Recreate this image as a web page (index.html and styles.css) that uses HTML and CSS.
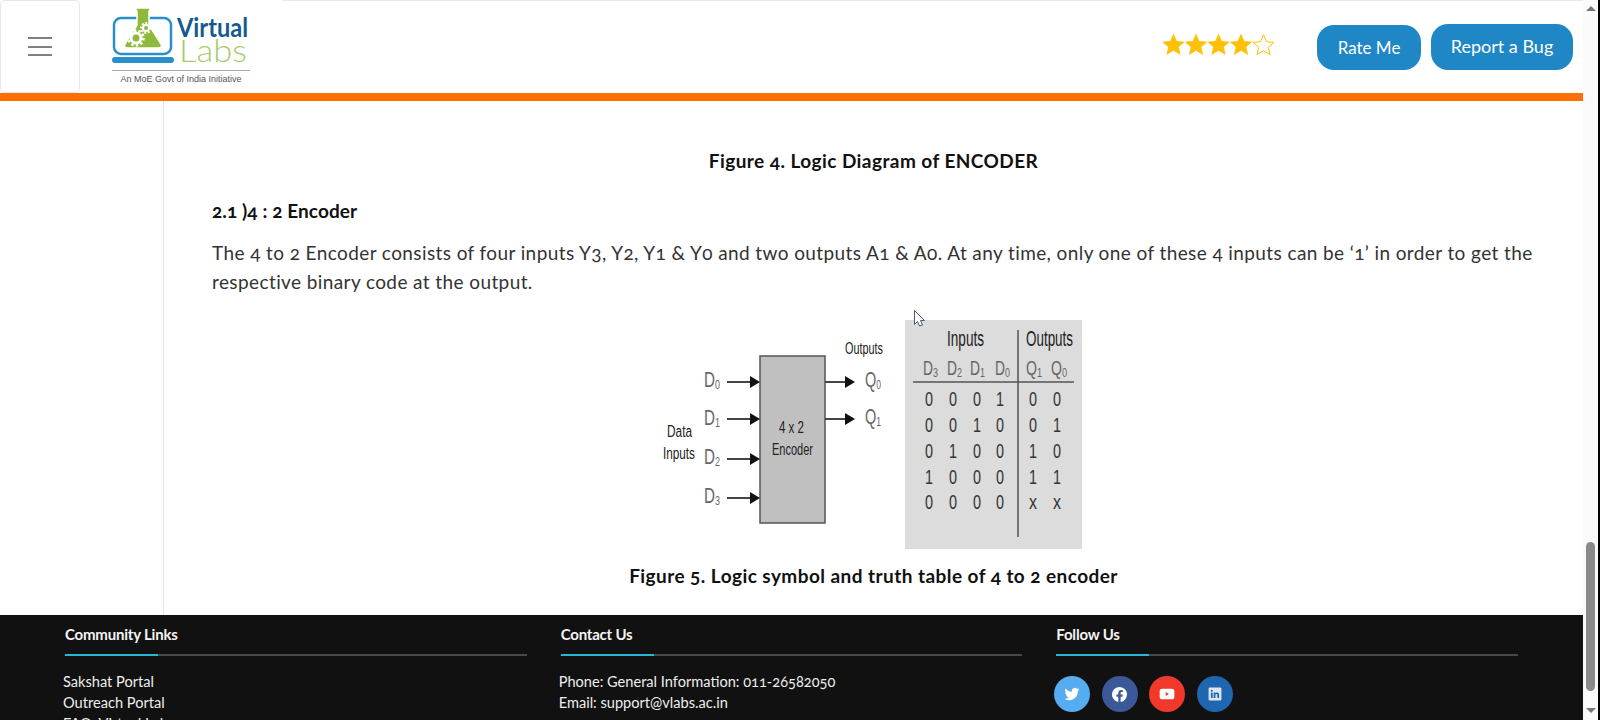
FILE: index.html
```html
<!DOCTYPE html>
<html lang="en">
<head>
    <meta charset="UTF-8">
    <meta name="viewport" content="width=device-width, initial-scale=1.0">
    <title>Encoder - Theory</title>
    <link rel="stylesheet" href="styles.css">
</head>
<body>
<div class="page">
    <div class="main">
        <header class="topbar">
            <button class="menu-btn" aria-label="menu"><span></span><span></span><span></span></button>
            <div class="logo">
                <svg width="138" height="63" viewBox="0 0 138 63">
                    <rect x="2" y="11" width="57" height="36" rx="7" fill="none" stroke="#2a8ec9" stroke-width="2.500"/>
                    <rect x="0" y="50" width="62" height="6" rx="3" fill="#2a8ec9"/>
                    <path d="M24 1h14v3h-1v14l12 19q2 4-3 4H16q-5 0-3-4l12-19V4h-1z" fill="#8fb93a" stroke="#fff" stroke-width="1.500"/>
                    <circle cx="24" cy="31" r="5" fill="none" stroke="#fff" stroke-width="3"/>
                    <circle cx="24" cy="31" r="7.500" fill="none" stroke="#fff" stroke-width="2.500" stroke-dasharray="2.500 2.200"/>
                    <circle cx="34" cy="21" r="3" fill="none" stroke="#fff" stroke-width="2"/>
                    <circle cx="34" cy="21" r="5" fill="none" stroke="#fff" stroke-width="1.800" stroke-dasharray="2 1.700"/>
                    <text x="65" y="30" class="logo-virtual" textLength="71" lengthAdjust="spacingAndGlyphs">Virtual</text>
                    <text x="67" y="55" class="logo-labs" textLength="68" lengthAdjust="spacingAndGlyphs">Labs</text>
                </svg>
                <div class="logo-note">An MoE Govt of India Initiative</div>
            </div>
            <div class="topbar-right">
                <div class="stars">
                    <svg width="114" height="24" viewBox="0 0 114 24">
                        <path id="star" d="M11.500 .5l3.300 7.500 8 .7-6 5.300 1.800 8-7.100-4.200-7.100 4.200 1.800-8-6-5.300 8-.7z" fill="#ffc107"/>
                        <use href="#star" x="22.500"/>
                        <use href="#star" x="45"/>
                        <use href="#star" x="67.500"/>
                        <path d="M101.500 1.800l3 6.900 7.400.7-5.600 4.900 1.700 7.300-6.500-3.900-6.500 3.900 1.700-7.300-5.600-4.900 7.400-.7z" fill="none" stroke="#ffc107" stroke-width="1"/>
                    </svg>
                </div>
                <a class="btn btn-rate">Rate Me</a>
                <a class="btn btn-bug">Report a Bug</a>
            </div>
        </header>

        <div class="content-wrap">
            <main class="content">
                <p class="caption caption-first">Figure 4. Logic Diagram of ENCODER</p>
                <h4 class="sub-head">2.1 )4 : 2 Encoder</h4>
                <p class="para">The 4 to 2 Encoder consists of four inputs Y3, Y2, Y1 &amp; Y0 and two outputs A1 &amp; A0. At any time, only one of these 4 inputs can be ‘1’ in order to get the respective binary code at the output.</p>
                <svg class="figure" width="440" height="248" viewBox="654 308 440 248">
                    <rect x="905" y="320" width="177" height="229" fill="#dcdcdc"/>
                    <rect x="760" y="356" width="65" height="167" fill="#c0c0c0" stroke="#555" stroke-width="1.500"/>
                    <path d="M727 382h24M727 419h24M727 459h24M727 498h24M825 382h20M825 419h20" stroke="#444" stroke-width="2"/>
                    <path d="M750 376l10 6-10 6zM750 413l10 6-10 6zM750 453l10 6-10 6zM750 492l10 6-10 6zM845 376l10 6-10 6zM845 413l10 6-10 6z" fill="#111"/>
                    <g class="dia">
                        <text x="845" y="354" textLength="38" lengthAdjust="spacingAndGlyphs">Outputs</text>
                        <text x="667" y="437" textLength="25" lengthAdjust="spacingAndGlyphs">Data</text>
                        <text x="663" y="459" textLength="32" lengthAdjust="spacingAndGlyphs">Inputs</text>
                        <text x="779" y="433" textLength="25" lengthAdjust="spacingAndGlyphs">4 x 2</text>
                        <text x="772" y="455" textLength="41" lengthAdjust="spacingAndGlyphs">Encoder</text>
                    </g>
                    <g class="dia-sig">
                        <text x="704" y="387" textLength="16" lengthAdjust="spacingAndGlyphs">D<tspan class="sub" dy="2">0</tspan></text>
                        <text x="704" y="425" textLength="16" lengthAdjust="spacingAndGlyphs">D<tspan class="sub" dy="2">1</tspan></text>
                        <text x="704" y="464" textLength="16" lengthAdjust="spacingAndGlyphs">D<tspan class="sub" dy="2">2</tspan></text>
                        <text x="704" y="503" textLength="16" lengthAdjust="spacingAndGlyphs">D<tspan class="sub" dy="2">3</tspan></text>
                        <text x="865" y="387" textLength="16" lengthAdjust="spacingAndGlyphs">Q<tspan class="sub" dy="2">0</tspan></text>
                        <text x="865" y="424" textLength="16" lengthAdjust="spacingAndGlyphs">Q<tspan class="sub" dy="2">1</tspan></text>
                    </g>
                    <path d="M1018 330v207" stroke="#555" stroke-width="1.500"/>
                    <path d="M913 382h161" stroke="#555" stroke-width="1.500"/>
                    <g class="tbl-head">
                        <text x="947" y="346" textLength="37" lengthAdjust="spacingAndGlyphs">Inputs</text>
                        <text x="1026" y="346" textLength="47" lengthAdjust="spacingAndGlyphs">Outputs</text>
                    </g>
                    <g class="dia-sig tbl-sig">
                        <text x="923" y="375" textLength="15" lengthAdjust="spacingAndGlyphs">D<tspan class="sub" dy="2">3</tspan></text>
                        <text x="947" y="375" textLength="15" lengthAdjust="spacingAndGlyphs">D<tspan class="sub" dy="2">2</tspan></text>
                        <text x="970" y="375" textLength="15" lengthAdjust="spacingAndGlyphs">D<tspan class="sub" dy="2">1</tspan></text>
                        <text x="995" y="375" textLength="15" lengthAdjust="spacingAndGlyphs">D<tspan class="sub" dy="2">0</tspan></text>
                        <text x="1026" y="375" textLength="16" lengthAdjust="spacingAndGlyphs">Q<tspan class="sub" dy="2">1</tspan></text>
                        <text x="1051" y="375" textLength="16" lengthAdjust="spacingAndGlyphs">Q<tspan class="sub" dy="2">0</tspan></text>
                    </g>
                    <g class="tbl-num">
                        <text x="925" y="406" textLength="8" lengthAdjust="spacingAndGlyphs">0</text><text x="949" y="406" textLength="8" lengthAdjust="spacingAndGlyphs">0</text><text x="973" y="406" textLength="8" lengthAdjust="spacingAndGlyphs">0</text><text x="996" y="406" textLength="8" lengthAdjust="spacingAndGlyphs">1</text><text x="1029" y="406" textLength="8" lengthAdjust="spacingAndGlyphs">0</text><text x="1053" y="406" textLength="8" lengthAdjust="spacingAndGlyphs">0</text>
                        <text x="925" y="432" textLength="8" lengthAdjust="spacingAndGlyphs">0</text><text x="949" y="432" textLength="8" lengthAdjust="spacingAndGlyphs">0</text><text x="973" y="432" textLength="8" lengthAdjust="spacingAndGlyphs">1</text><text x="996" y="432" textLength="8" lengthAdjust="spacingAndGlyphs">0</text><text x="1029" y="432" textLength="8" lengthAdjust="spacingAndGlyphs">0</text><text x="1053" y="432" textLength="8" lengthAdjust="spacingAndGlyphs">1</text>
                        <text x="925" y="458" textLength="8" lengthAdjust="spacingAndGlyphs">0</text><text x="949" y="458" textLength="8" lengthAdjust="spacingAndGlyphs">1</text><text x="973" y="458" textLength="8" lengthAdjust="spacingAndGlyphs">0</text><text x="996" y="458" textLength="8" lengthAdjust="spacingAndGlyphs">0</text><text x="1029" y="458" textLength="8" lengthAdjust="spacingAndGlyphs">1</text><text x="1053" y="458" textLength="8" lengthAdjust="spacingAndGlyphs">0</text>
                        <text x="925" y="484" textLength="8" lengthAdjust="spacingAndGlyphs">1</text><text x="949" y="484" textLength="8" lengthAdjust="spacingAndGlyphs">0</text><text x="973" y="484" textLength="8" lengthAdjust="spacingAndGlyphs">0</text><text x="996" y="484" textLength="8" lengthAdjust="spacingAndGlyphs">0</text><text x="1029" y="484" textLength="8" lengthAdjust="spacingAndGlyphs">1</text><text x="1053" y="484" textLength="8" lengthAdjust="spacingAndGlyphs">1</text>
                        <text x="925" y="509" textLength="8" lengthAdjust="spacingAndGlyphs">0</text><text x="949" y="509" textLength="8" lengthAdjust="spacingAndGlyphs">0</text><text x="973" y="509" textLength="8" lengthAdjust="spacingAndGlyphs">0</text><text x="996" y="509" textLength="8" lengthAdjust="spacingAndGlyphs">0</text><text x="1029" y="509" textLength="8" lengthAdjust="spacingAndGlyphs">x</text><text x="1053" y="509" textLength="8" lengthAdjust="spacingAndGlyphs">x</text>
                    </g>
                    <path d="M914.500 310.500v14l3-3 2 4.500 3-1-2-4.500h4z" fill="#fff" stroke="#4a5a7a" stroke-width="1"/>
                </svg>
                <p class="caption">Figure 5. Logic symbol and truth table of 4 to 2 encoder</p>
            </main>
        </div>

        <footer class="footer">
            <div class="foot-col">
                <h5 class="foot-head">Community Links</h5>
                <ul class="foot-list">
                    <li>Sakshat Portal</li>
                    <li>Outreach Portal</li>
                    <li>FAQ: Virtual Labs</li>
                </ul>
            </div>
            <div class="foot-col">
                <h5 class="foot-head">Contact Us</h5>
                <ul class="foot-list">
                    <li>Phone: General Information: 011-26582050</li>
                    <li>Email: support@vlabs.ac.in</li>
                </ul>
            </div>
            <div class="foot-col">
                <h5 class="foot-head">Follow Us</h5>
                <div class="socials">
                    <a class="soc soc-tw"><svg width="16" height="16" viewBox="0 0 24 24"><path fill="#fff" d="M23 5c-.8.400-1.700.600-2.600.700.900-.600 1.600-1.400 2-2.500-.900.500-1.900.900-2.900 1.100A4.600 4.600 0 0 0 11.700 8.500C7.900 8.300 4.500 6.500 2.200 3.700c-1.200 2.100-.6 4.800 1.400 6.100-.7 0-1.400-.2-2.100-.6 0 2.200 1.600 4.200 3.700 4.600-.7.200-1.400.2-2.100.1.600 1.900 2.300 3.200 4.300 3.200A9.300 9.300 0 0 1 .6 19a13 13 0 0 0 20.100-11.500c.9-.6 1.700-1.500 2.300-2.500z"/></svg></a>
                    <a class="soc soc-fb"><svg width="15" height="15" viewBox="0 0 24 24"><path fill="#fff" d="M24 12a12 12 0 1 0-13.900 11.900v-8.400H7.100V12h3V9.400c0-3 1.800-4.700 4.500-4.700 1.300 0 2.700.2 2.700.2v3h-1.500c-1.500 0-2 .9-2 1.900V12h3.400l-.5 3.500h-2.900v8.400A12 12 0 0 0 24 12z"/></svg></a>
                    <a class="soc soc-yt"><svg width="16" height="16" viewBox="0 0 24 24"><rect x="1" y="4" width="22" height="16" rx="4" fill="#fff"/><path fill="#f0392b" d="M10 9l5 3-5 3z"/></svg></a>
                    <a class="soc soc-li"><svg width="14" height="14" viewBox="0 0 24 24"><path fill="#dde6f3" d="M21 1H3a2 2 0 0 0-2 2v18c0 1.100.9 2 2 2h18a2 2 0 0 0 2-2V3a2 2 0 0 0-2-2zM8 19H5V9.500h3zM6.500 8.200a1.700 1.700 0 1 1 0-3.500 1.700 1.700 0 0 1 0 3.500zM19 19h-3v-4.700c0-1.100 0-2.500-1.500-2.500s-1.800 1.200-1.800 2.400V19h-3V9.500h2.900v1.300c.4-.8 1.400-1.500 2.900-1.500 3 0 3.500 2 3.500 4.600z"/></svg></a>
                </div>
            </div>
        </footer>
    </div>

    <div class="scrollbar">
        <span class="arrow-up"></span>
        <div class="track"><div class="thumb"></div></div>
        <span class="arrow-down"></span>
    </div>
</div>
</body>
</html>
```
FILE: styles.css
```css
* {
    box-sizing: border-box;
}
html, body {
    margin: 0;
    padding: 0;
    height: 720px;
    overflow: hidden;
    background-color: #fff;
}
body {
    font-family: Lato, "Open Sans", sans-serif;
    font-feature-settings: "onum";
    color: #222;
}
.page {
    display: flex;
    height: 720px;
}
.main {
    flex: 1;
    min-width: 0;
    display: flex;
    flex-direction: column;
    overflow: hidden;
}

/* header */
.topbar {
    position: relative;
    flex: none;
    height: 101px;
    display: flex;
    align-items: flex-start;
    border-bottom: 8px solid #ff6f07;
}
.topbar::before {
    content: "";
    position: absolute;
    top: 0;
    left: 282px;
    right: 0;
    height: 1px;
    background-color: #e2eaea;
}
.menu-btn {
    width: 80px;
    height: 93px;
    background: #fff;
    border: 1px solid #e8e8e8;
    border-radius: 5px;
    display: flex;
    flex-direction: column;
    justify-content: center;
    align-items: center;
    gap: 6.500px;
    padding: 0;
}
.menu-btn span {
    display: block;
    width: 24px;
    height: 2px;
    background-color: #808080;
}
.logo {
    margin-left: 32px;
    padding-top: 7px;
    width: 138px;
}
.logo svg {
    display: block;
}
.logo-virtual {
    font: 700 26px Lato, sans-serif;
    font-feature-settings: normal;
    fill: #155a8f;
}
.logo-labs {
    font: 300 31px Lato, sans-serif;
    fill: #a9cb6c;
}
.logo-note {
    border-top: 1px solid #aaa;
    font: 9px "Liberation Sans", Arial, sans-serif;
    color: #555;
    text-align: center;
    padding-top: 3px;
    white-space: nowrap;
}
.topbar-right {
    margin-left: auto;
    padding: 24px 10px 0 0;
    display: flex;
    align-items: center;
}
.stars {
    margin: 0 41px 4px 0;
    display: flex;
}
.btn {
    background-color: #1f87c6;
    color: #fff;
    font-size: 17px;
    border-radius: 17px;
    display: flex;
    align-items: center;
    justify-content: center;
    height: 45px;
}
.btn-rate {
    width: 104px;
    margin-right: 10px;
}
.btn-bug {
    width: 142px;
    height: 46px;
    font-size: 18px;
    padding-bottom: 3px;
}

/* content */
.content-wrap {
    flex: 1;
    min-height: 0;
    overflow: hidden;
}
.content {
    margin-left: 163px;
    height: 100%;
    border-left: 1px solid #e4e4e4;
    padding: 48px 48px 0;
}
.caption {
    margin: 0;
    text-align: center;
    font-size: 19px;
    font-weight: 700;
    letter-spacing: .44px;
    line-height: 24px;
    color: #111;
}
.caption-first {
    margin-bottom: 26px;
}
.sub-head {
    margin: 0 0 15px;
    font-size: 19px;
    font-weight: 700;
    letter-spacing: .1px;
    line-height: 24px;
    color: #111;
}
.para {
    margin: 0 0 12px;
    font-size: 19px;
    letter-spacing: .4px;
    line-height: 29px;
    color: #333;
}
.figure {
    display: block;
    margin: 0 auto 8px;
}
.dia text {
    font: 16px "Liberation Sans", sans-serif;
    fill: #222;
}
.dia-sig text {
    font: 22px "Liberation Sans", sans-serif;
    fill: #666;
}
.dia-sig .sub {
    font-size: 13px;
}
.tbl-sig text {
    font-size: 20px;
}
.tbl-head text {
    font: 22px "Liberation Sans", sans-serif;
    fill: #222;
}
.tbl-num text {
    font: 21px "Liberation Sans", sans-serif;
    fill: #333;
}

/* footer */
.footer {
    flex: none;
    height: 105px;
    background-color: #111;
    color: #eee;
    padding: 8px 65px 0;
    display: grid;
    grid-template-columns: repeat(3, 1fr);
    column-gap: 34px;
    overflow: hidden;
}
.foot-head {
    position: relative;
    margin: 0;
    height: 33px;
    border-bottom: 2px solid #4a4a4a;
    font-size: 15px;
    font-weight: 700;
    letter-spacing: -.2px;
    line-height: 22px;
    color: #f4f4f4;
}
.foot-head::after {
    content: "";
    position: absolute;
    left: 0;
    bottom: -2px;
    width: 93px;
    height: 2px;
    background-color: #29b6d8;
}
.foot-list {
    list-style: none;
    margin: 15px 0 0 -2px;
    padding: 0;
    font-size: 14.600px;
    line-height: 21px;
}
.socials {
    display: flex;
    gap: 11.400px;
    margin: 20px 0 0 -2px;
}
.soc {
    width: 36px;
    height: 36px;
    border-radius: 50%;
    display: flex;
    align-items: center;
    justify-content: center;
}
.soc-tw { background-color: #55acee; }
.soc-fb { background-color: #3b5998; }
.soc-yt { background-color: #f0392b; }
.soc-li { background-color: #1f66b0; }

/* scrollbar */
.scrollbar {
    flex: none;
    width: 17px;
    background-color: #fafafa;
    border-right: 2px solid #000;
    display: flex;
    flex-direction: column;
    align-items: center;
}
.arrow-up, .arrow-down {
    flex: none;
    width: 0;
    height: 0;
    border-left: 5px solid transparent;
    border-right: 5px solid transparent;
}
.arrow-up {
    margin: 6px 0;
    border-bottom: 5px solid #777;
}
.arrow-down {
    margin: 0 0 7px;
    border-top: 5px solid #777;
}
.track {
    flex: 1;
    width: 100%;
    padding-top: 525px;
}
.thumb {
    width: 9px;
    height: 149px;
    margin: 0 auto;
    border-radius: 5px;
    background-color: #8a8a8a;
}
```
